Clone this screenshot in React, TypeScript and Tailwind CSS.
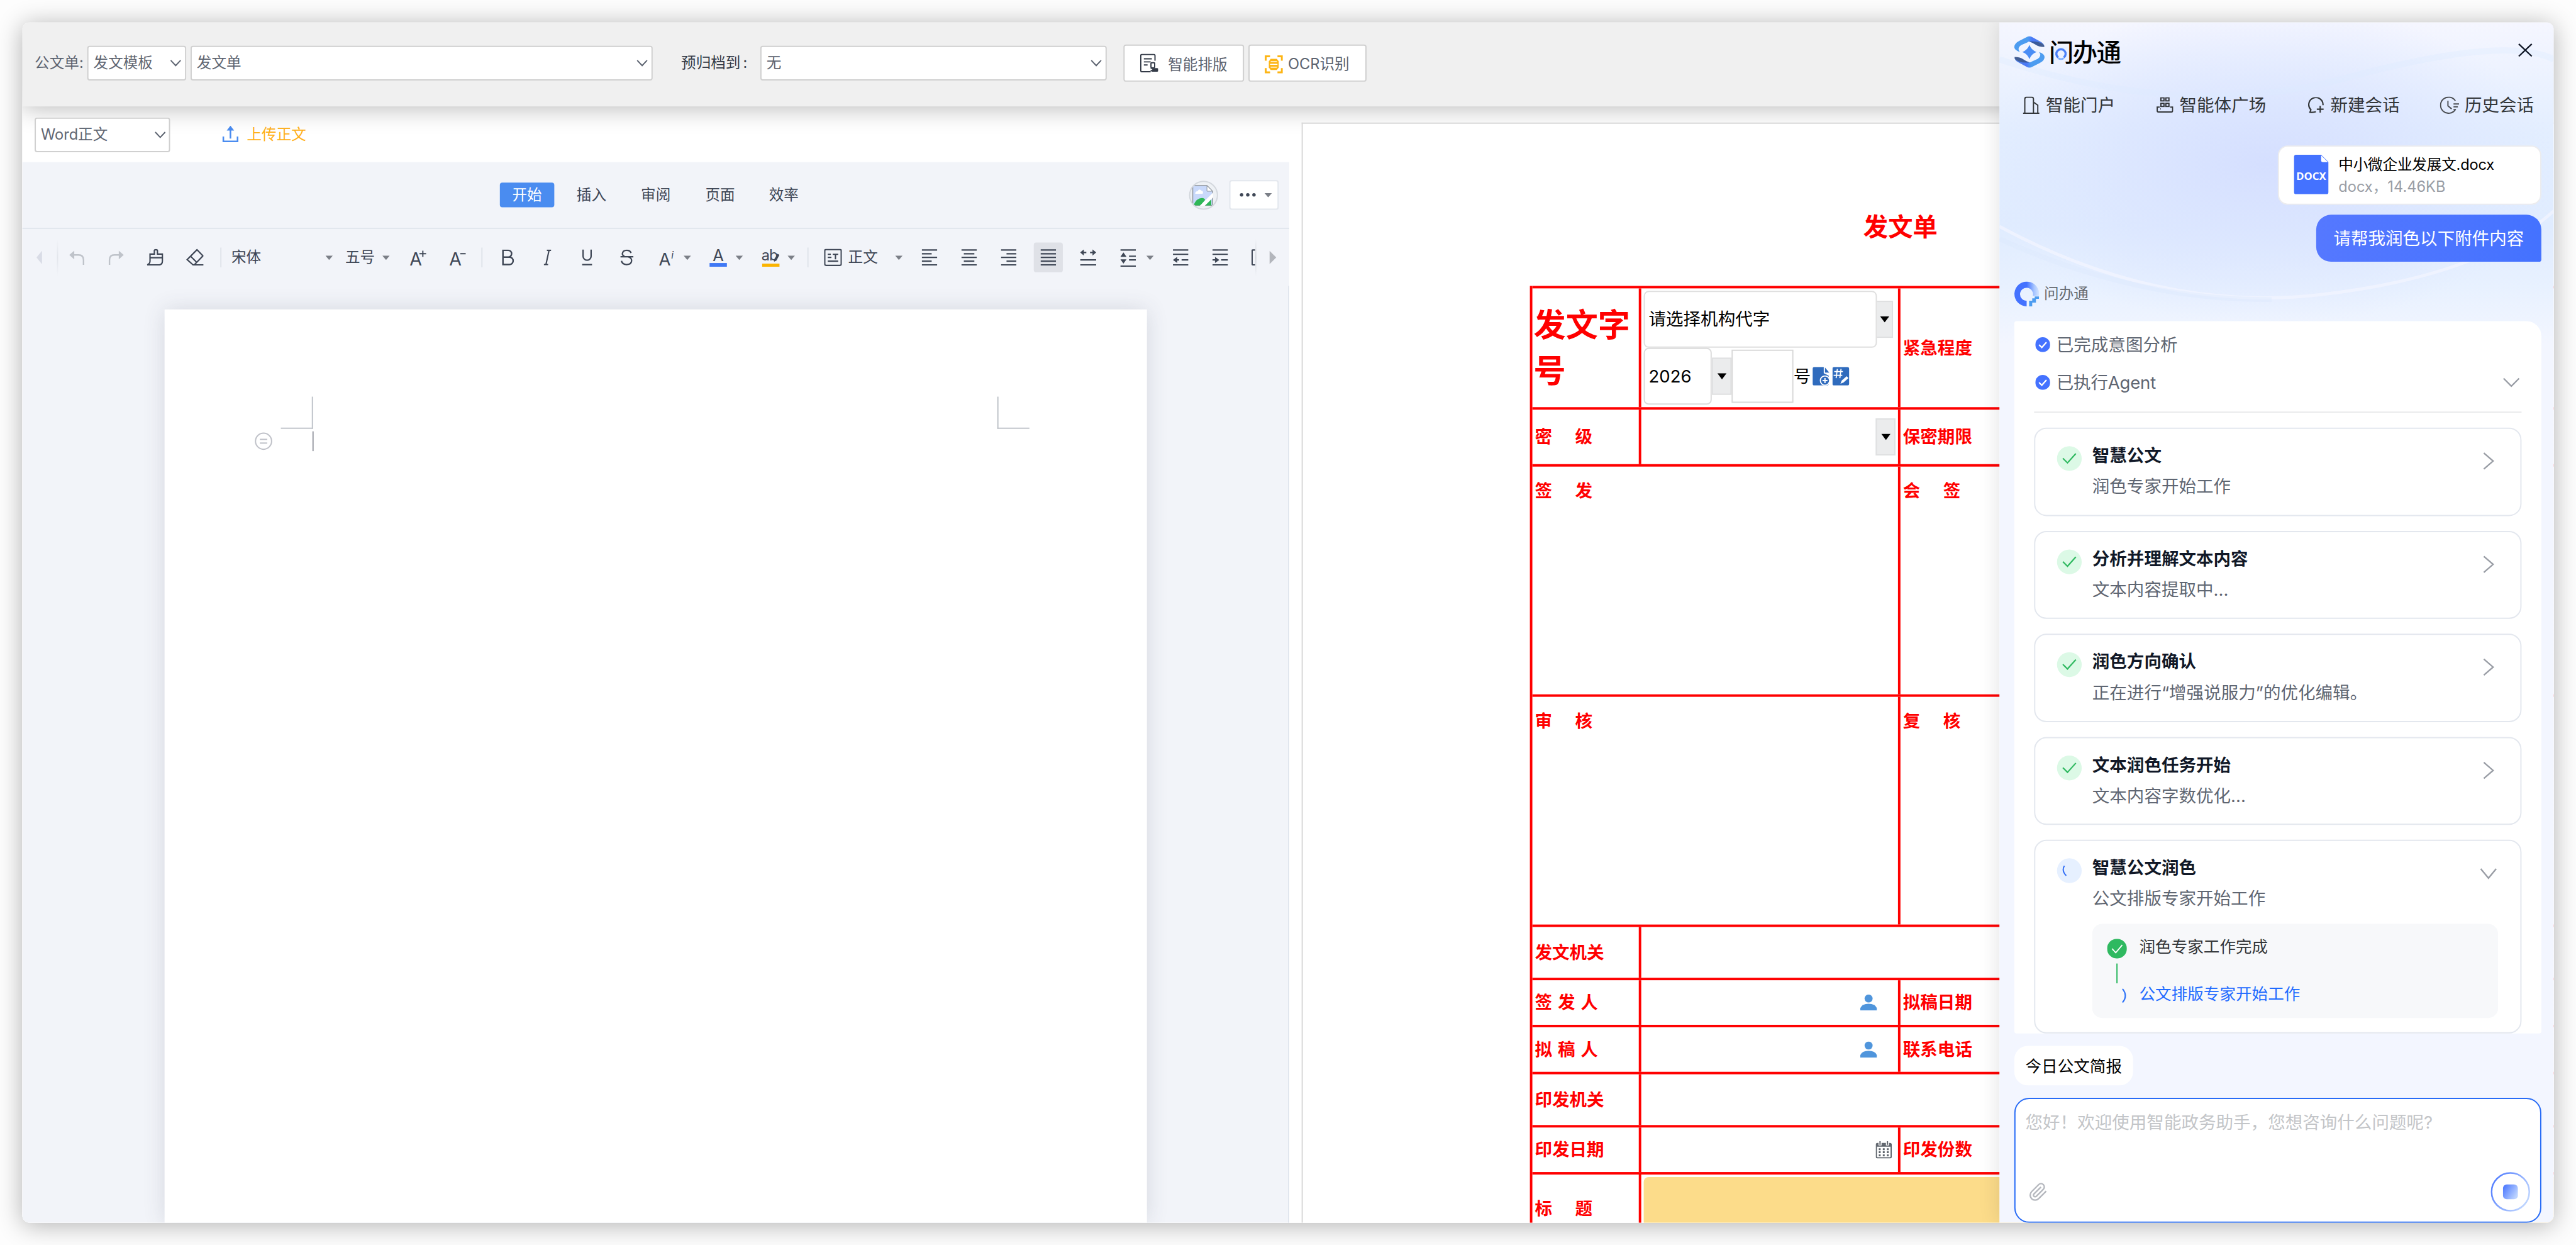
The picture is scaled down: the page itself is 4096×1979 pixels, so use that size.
import React from 'react';

const INK = '#3f4756';

function Chevron({ className = '' }: { className?: string }) {
  return (
    <svg className={className} width="18" height="12" viewBox="0 0 18 12" fill="none" stroke="#5c6370" strokeWidth="2">
      <path d="M1 1.500 9 10 17 1.500" />
    </svg>
  );
}

function Caret({ className = '' }: { className?: string }) {
  return (
    <svg className={'shrink-0 ' + className} width="12" height="7" viewBox="0 0 12 7" fill="#7b7f87">
      <path d="M0 0h12L6 7z" />
    </svg>
  );
}

function Select({ text, className, box }: { text: string; className: string; box: string }) {
  return (
    <div className={'flex shrink-0 items-center justify-between rounded border-2 border-[#d0d0d0] bg-white pl-2 text-[#5f6672] ' + box + ' ' + className}>
      <span>{text}</span>
      <Chevron />
    </div>
  );
}

function Header() {
  return (
    <div className="relative z-0 flex h-[136px] shrink-0 items-start bg-[#f0f0f0] pl-5 pt-[36px] text-[24px] leading-[56px] shadow-[0_4px_38px_rgba(0,0,0,0.28)]">
      <span className="mt-[2px] w-[85px] text-[#5c6370]">公文单:</span>
      <Select text="发文模板" box="h-[56px] w-[160px]" className="mt-[2px] pr-[6px]" />
      <Select text="发文单" box="h-[56px] w-[747px]" className="ml-[7px] mt-[2px] pr-[6px]" />
      <span className="ml-[46px] mt-[2px] w-[128px] whitespace-nowrap text-[#333a47]">
        预归档到<span className="ml-[4px]">:</span>
      </span>
      <Select text="无" box="h-[56px] w-[560px]" className="mt-[2px] pr-[6px]" />
      <div className="ml-[27px] flex h-[60px] w-[195px] items-center rounded border-2 border-[#d0d0d0] bg-white pl-[25px] text-[#5c6370]">
        <svg width="29" height="30" viewBox="0 0 29 30" fill="none" stroke="#333a47" strokeWidth="2">
          <path d="M24 11V3a2 2 0 0 0-2-2H3a2 2 0 0 0-2 2v24a2 2 0 0 0 2 2h14M6 8h13M6 13h11M6 18h6" />
          <rect x="17.500" y="14.500" width="6" height="8" rx="1" />
          <path d="M16 23h11a2 2 0 0 1 0 6h-8l-3-2.500 4-1z" fill="#333a47" stroke="none" />
        </svg>
        <span className="ml-[16px] mt-[5px]">智能排版</span>
      </div>
      <div className="ml-[7px] flex h-[60px] w-[191px] items-center rounded border-2 border-[#d0d0d0] bg-white pl-[24px] text-[#5c6370]">
        <svg className="mt-[4px]" width="30" height="30" viewBox="0 0 30 30" fill="none" stroke="#fdb515" strokeWidth="3">
          <path d="M2 9V2h7M21 2h7v7M28 21v7h-7M9 28H2v-7" />
          <path d="M10 6h10l3 4v10l-3 4H10l-3-4V10z" fill="#fdb515" stroke="none" />
          <path d="M10 10.500h10M9 15h12M10 19.500h10" stroke="#fff" strokeWidth="1.500" />
        </svg>
        <span className="ml-[8px] mt-[4px] whitespace-nowrap">OCR识别</span>
      </div>
    </div>
  );
}

function Lines({ rows, w = 25, className = '' }: { rows: number[][]; w?: number; className?: string }) {
  return (
    <svg className={'shrink-0 ' + className} width={w} height="28" viewBox={'0 0 ' + w + ' 28'} stroke={INK} strokeWidth="2.200">
      {rows.map(([x1, x2, y], i) => (
        <path key={i} d={`M${x1} ${y}H${x2}`} />
      ))}
    </svg>
  );
}

function Sep({ className }: { className: string }) {
  return <div className={'h-8 w-[2px] shrink-0 bg-[#e0e4ea] ' + className} />;
}

function Ribbon() {
  return (
    <div className="flex h-[92px] items-center text-[24px] text-[#3f4756]">
      <svg className="ml-[23px] shrink-0" width="9" height="22" viewBox="0 0 9 22" fill="#d9dce6"><path d="M9 0v22L0 11z" /></svg>
      <div className="ml-[24px] h-[60px] w-[2px] shrink-0 bg-linear-to-b from-transparent via-[#e2e5eb] to-transparent" />
      <svg className="ml-[17px] shrink-0" width="27" height="26" viewBox="0 0 27 26" fill="none" stroke="#bfc3ca" strokeWidth="2.400">
        <path d="M6 9h10q8 0 8 8v8" /><path d="M9 2v14L1 9z" fill="#bfc3ca" stroke="none" />
      </svg>
      <svg className="ml-[36px] shrink-0" width="27" height="26" viewBox="0 0 27 26" fill="none" stroke="#bfc3ca" strokeWidth="2.400">
        <path d="M20 9H11q-8 0-8 8v8" /><path d="M18 2v14l8-7z" fill="#bfc3ca" stroke="none" />
      </svg>
      <svg className="ml-[36px] shrink-0" width="28" height="28" viewBox="0 0 28 28" fill="none" stroke={INK} strokeWidth="2.200">
        <path d="M5.500 8.500h7V3q0-1.500 2.500-1.500T17.500 3v5.500h8V20q0 6-6 6H1q4.500-1.500 4.500-6zM5.500 14.500h20" />
      </svg>
      <svg className="ml-[36px] shrink-0" width="28" height="28" viewBox="0 0 28 28" fill="none" stroke={INK} strokeWidth="2.200">
        <path d="M17.500 1.500 27 11.500 13 26H11L1.500 17.500zM7.500 12.500 17 22M11 26h17" />
      </svg>
      <Sep className="ml-[27px]" />
      <span className="ml-[16px] w-[48px] shrink-0">宋体</span>
      <Caret className="ml-[104px]" />
      <span className="ml-[20px] w-[48px] shrink-0">五号</span>
      <Caret className="ml-[12px]" />
      <svg className="ml-[32px] shrink-0" width="27" height="40" viewBox="0 -6 27 40" stroke={INK} strokeWidth="2">
        <text x="0" y="27" fontSize="29" fill={INK} stroke="none">A</text><path d="M16 8h11M21.500 3v10" />
      </svg>
      <svg className="ml-[37px] shrink-0" width="27" height="40" viewBox="0 -6 27 40" stroke={INK} strokeWidth="2">
        <text x="0" y="27" fontSize="29" fill={INK} stroke="none">A</text><path d="M18 8h9" />
      </svg>
      <Sep className="ml-[25px]" />
      <svg className="ml-[31px] shrink-0" width="20" height="26" viewBox="0 0 20 26" fill="none" stroke={INK} strokeWidth="2.500">
        <path d="M2 1.500h8.500a5.500 5.500 0 0 1 0 11H2zM2 12.500h10.500a6 6 0 0 1 0 12H2z" />
      </svg>
      <svg className="ml-[48px] shrink-0" width="12" height="26" viewBox="0 0 12 26" fill="none" stroke={INK} strokeWidth="2.200">
        <path d="M5 1.500h7M0 24.500h7M8.500 1.500l-5 23" />
      </svg>
      <svg className="ml-[49px] shrink-0" width="18" height="26" viewBox="0 0 18 26" fill="none" stroke={INK} strokeWidth="2.300">
        <path d="M2.500 0v11a6.500 6.500 0 0 0 13 0V0M1 24.500h16" />
      </svg>
      <svg className="ml-[44px] shrink-0" width="22" height="26" viewBox="0 0 22 26" fill="none" stroke={INK} strokeWidth="2.300">
        <path d="M18 6Q17 1.500 11 1.500T4 7q0 3 4 5M1 12h21M13 12q6 1.500 6 6 0 6-8 6.500-7 0-8.500-6" />
      </svg>
      <svg className="ml-[41px] shrink-0" width="26" height="40" viewBox="0 -6 26 40" fill={INK}>
        <text x="0" y="27" fontSize="28">A</text><text x="20" y="16" fontSize="16" fontStyle="italic">i</text>
      </svg>
      <Caret className="ml-[14px]" />
      <div className="ml-[29px] flex w-[30px] shrink-0 flex-col items-center">
        <span className="h-[24px] text-[26px] leading-[24px]">A</span>
        <div className="h-[6px] w-[28px] bg-[#3f78f5]" />
      </div>
      <Caret className="ml-[13px]" />
      <div className="ml-[29px] flex w-[31px] shrink-0 flex-col items-center">
        <div className="flex h-[24px] items-center text-[24px] leading-[24px] tracking-[-1px]">
          ab<svg className="-ml-[6px] mt-[7px]" width="9" height="13" viewBox="0 0 9 13" fill={INK}><path d="M6 0l3 2-5 9-4 2 1-5z" /></svg>
        </div>
        <div className="mt-[1px] h-[5px] w-[28px] bg-[#fbb400]" />
      </div>
      <Caret className="ml-[12px]" />
      <Sep className="ml-[20px]" />
      <svg className="ml-[25px] shrink-0" width="29" height="28" viewBox="0 0 29 28" fill="none" stroke={INK} strokeWidth="2.200">
        <rect x="1.200" y="1.200" width="26.600" height="25.600" rx="2" /><path d="M6 9h5M6 14h6M14 9h9M18.500 9v8M6 20h17" />
      </svg>
      <span className="ml-[10px] w-[48px] shrink-0">正文</span>
      <Caret className="ml-[28px]" />
      <Lines className="ml-[31px]" rows={[[0, 25, 2], [0, 16, 8], [0, 25, 14], [0, 16, 20], [0, 25, 26]]} />
      <Lines className="ml-[39px]" rows={[[0, 25, 2], [4, 21, 8], [0, 25, 14], [4, 21, 20], [0, 25, 26]]} />
      <Lines className="ml-[39px]" rows={[[0, 25, 2], [9, 25, 8], [0, 25, 14], [9, 25, 20], [0, 25, 26]]} />
      <div className="ml-[28px] flex h-[48px] w-[47px] shrink-0 items-center justify-center rounded bg-[#dfe1e7]">
        <Lines rows={[[0, 25, 2], [0, 25, 8], [0, 25, 14], [0, 25, 20], [0, 25, 26]]} />
      </div>
      <svg className="ml-[28px] shrink-0" width="26" height="28" viewBox="0 0 26 28" stroke={INK} strokeWidth="2.200">
        <path d="M4 6h6M16 6h6M0 18h26M0 26h26" /><path d="M6 1v10L0 6zM20 1v10l6-5z" fill={INK} stroke="none" />
      </svg>
      <svg className="ml-[39px] shrink-0" width="25" height="30" viewBox="0 0 25 30" stroke={INK} strokeWidth="2.200">
        <path d="M0 3h25M14 13h11M14 19h11M0 29h25" /><path d="M5 7l5 7H0zM5 25l5-7H0z" fill={INK} stroke="none" />
      </svg>
      <Caret className="ml-[17px]" />
      <svg className="ml-[31px] shrink-0" width="25" height="28" viewBox="0 0 25 28" stroke={INK} strokeWidth="2.200">
        <path d="M0 2h25M0 9h25M4 18h6M14 18h11M0 26h25" /><path d="M7 13v10l-7-5z" fill={INK} stroke="none" />
      </svg>
      <svg className="ml-[39px] shrink-0" width="25" height="28" viewBox="0 0 25 28" stroke={INK} strokeWidth="2.200">
        <path d="M0 2h25M0 9h25M0 18h6M14 18h11M0 26h25" /><path d="M4 13v10l7-5z" fill={INK} stroke="none" />
      </svg>
      <svg className="ml-[38px] shrink-0" width="6" height="28" viewBox="0 0 6 28" fill="none" stroke={INK} strokeWidth="2.200"><path d="M6 2H2q-1 0-1 1v22q0 1 1 1h4" /></svg>
      <div className="h-[60px] w-[2px] shrink-0 bg-linear-to-b from-transparent via-[#d5d8de] to-transparent" />
      <svg className="ml-[21px] shrink-0" width="11" height="22" viewBox="0 0 11 22" fill="#b3b6bc"><path d="M0 0v22l11-11z" /></svg>
    </div>
  );
}

function Editor() {
  return (
    <div className="flex w-[2048px] shrink-0 flex-col">
      <div className="flex h-[90px] shrink-0 items-start pl-[20px] pt-[18px] text-[24px] leading-[52px]">
        <Select text="Word正文" box="h-[56px] w-[219px]" className="relative z-20 pr-[5px]" />
        <svg className="ml-[84px] mt-[13px]" width="27" height="28" viewBox="0 0 27 28" fill="none" stroke="#4a8cf0" strokeWidth="2.600">
          <path d="M13.500 4v17M2 17.500v8h23v-8" /><path d="M13.500 0l6 8h-12z" fill="#4a8cf0" stroke="none" />
        </svg>
        <span className="ml-[13px] mt-[2px] text-[#ffb11a]">上传正文</span>
      </div>
      <div className="relative flex min-h-0 flex-1 flex-col bg-[#f2f4f9]">
        <div className="flex h-[108px] shrink-0 items-center border-b-2 border-[#e1e6ee] pl-[772px] text-[24px] text-[#3f4756]">
          <div className="flex h-[40px] w-[88px] items-center justify-center rounded bg-[#4a8cf0] text-white">开始</div>
          <span className="ml-[36px]">插入</span>
          <span className="ml-[56px]">审阅</span>
          <span className="ml-[56px]">页面</span>
          <span className="ml-[55px]">效率</span>
          <div className="ml-auto mr-[18px] flex h-[47px] w-[47px] items-center justify-center overflow-hidden rounded-full border-2 border-[#d4d8de] bg-[#eef1f5]">
            <svg className="mr-[4px] mt-[2px]" width="34" height="34" viewBox="0 0 34 34">
              <path d="M1 1h23l9 9v23H1z" fill="#c9d9fb" stroke="#8e949c" strokeWidth="1.500" />
              <path d="M24 1v9h9z" fill="#fff" stroke="#8e949c" />
              <path d="M5 14q0-4 4-4 2-5 6-1 4 1 2 5z" fill="#fff" />
              <path d="M2 33q5-12 14-12 4 0 5 3l-7 9z" fill="#2fb757" /><path d="M21 33l10-10v10z" fill="#2fb757" />
              <path d="M12 34 34 12v8L20 34z" fill="#fff" />
            </svg>
          </div>
          <div className="mr-[17px] flex h-[48px] w-[80px] shrink-0 items-center rounded border-2 border-[#e3e7ed] bg-white pl-[14px]">
            <svg width="28" height="8" viewBox="0 0 28 8" fill={INK}><circle cx="4" cy="4" r="2.800" /><circle cx="14" cy="4" r="2.800" /><circle cx="24" cy="4" r="2.800" /></svg>
            <Caret className="ml-[13px]" />
          </div>
        </div>
        <div className="h-[92px] shrink-0"><Ribbon /></div>
        <div className="flex min-h-0 flex-1 justify-start border-r-2 border-[#e1e6ee] pl-[230px] pt-[38px]">
          <div className="h-full w-[1588px] bg-white px-[146px] pt-[141px] shadow-[0_0_34px_rgba(60,70,90,0.16)]">
            <div className="flex justify-between pl-[42px] pr-[44px]">
              <div className="h-[52px] w-[52px] border-b-2 border-r-2 border-[#bfc3c9]" />
              <div className="h-[52px] w-[52px] border-b-2 border-l-2 border-[#bfc3c9]" />
            </div>
            <div className="mt-[4px] flex items-center">
              <div className="flex h-[28px] w-[28px] flex-col items-center justify-center gap-[4px] rounded-full border-2 border-[#bfc1c8]">
                <div className="h-[2px] w-[12px] bg-[#bfc1c8]" /><div className="h-[2px] w-[12px] bg-[#bfc1c8]" />
              </div>
              <div className="ml-[65px] h-[32px] w-[2px] bg-[#999ca5]" />
            </div>
          </div>
        </div>
      </div>
    </div>
  );
}

function BlackCaret() {
  return <svg width="15" height="10" viewBox="0 0 15 10"><path d="M0 0h15L7.500 10z" /></svg>;
}

function DropButton({ className }: { className: string }) {
  return <div className={'flex h-[60px] items-center justify-center border-2 border-[#dfe0e1] bg-[#ebeced] ' + className}><BlackCaret /></div>;
}

function Row({ h, label, middle, right, top = false }: { h: string; label: React.ReactNode; middle?: React.ReactNode; right?: React.ReactNode; top?: boolean }) {
  const align = top ? 'items-start pt-[18px]' : 'items-center';
  return (
    <div className={'flex shrink-0 border-t-4 border-[#ff0000] ' + h}>
      <div className={'flex w-[172px] shrink-0 pl-[4px] ' + align}>{label}</div>
      <div className={'flex w-[419px] shrink-0 items-center ' + (top ? '' : 'border-l-4 border-[#ff0000]')}>{middle}</div>
      {right && <div className={'flex flex-1 border-l-4 border-[#ff0000] pl-[4px] ' + align}>{right}</div>}
    </div>
  );
}

function Spaced({ a, b, c }: { a: string; b: string; c?: string }) {
  return (
    <span className={'flex ' + (c ? 'gap-[9px]' : 'gap-[37px]')}>
      <span>{a}</span><span>{b}</span>{c && <span>{c}</span>}
    </span>
  );
}

function Person() {
  return (
    <svg className="ml-auto mr-[34px]" width="27" height="26" viewBox="0 0 27 26" fill="#4f95dc">
      <circle cx="13.500" cy="6.500" r="6.500" /><path d="M0 26v-4q3-7 13.500-7T27 22v4z" />
    </svg>
  );
}

function FormPane() {
  return (
    <div className="relative z-20 ml-[20px] mt-[26px] flex flex-1 flex-col overflow-hidden border-l-2 border-t-2 border-[#d8d8d8] bg-white">
      <div className="mt-[137px] flex h-[60px] items-center pl-[906px] text-[40px] font-bold text-[#ff0000]">发文单</div>
      <div className="ml-[367px] mt-[65px] flex flex-col border-l-4 border-[#ff0000] text-[28px] font-bold leading-[42px] text-[#ff0000]">
        <Row
          h="h-[196px]"
          label={<span className="-ml-[2px] mt-[2px] w-[165px] text-[52px] leading-[74px]">发文字号</span>}
          middle={
            <div className="flex flex-col pl-[4px] font-normal text-black">
              <div className="flex items-center">
                <div className="flex h-[92px] w-[377px] items-center rounded-lg border-2 border-[#dfdfdf] pl-[6px]">请选择机构代字</div>
                <DropButton className="w-[26px] border-l-0" />
              </div>
              <div className="flex items-center">
                <div className="flex h-[92px] w-[110px] items-center rounded-lg border-2 border-[#dcdcdc] pl-[6px]">2026</div>
                <DropButton className="w-[32px]" />
                <div className="h-[86px] w-[100px] border-2 border-[#d9d9d9]" />
                <span>号</span>
                <svg className="ml-[3px]" width="28" height="30" viewBox="0 0 28 30">
                  <path d="M3 0h15v10l8 4v13q0 3-3 3H3q-3 0-3-3V3q0-3 3-3z" fill="#2f6bbd" /><path d="M20 1l7 8h-7z" fill="#2f6bbd" />
                  <circle cx="20" cy="22" r="7.500" fill="#2f6bbd" stroke="#fff" strokeWidth="1.800" /><path d="M20 18v8M16 22h8" stroke="#fff" strokeWidth="2" />
                </svg>
                <svg className="ml-[4px]" width="28" height="30" viewBox="0 0 28 30">
                  <rect width="27" height="30" rx="3" fill="#2f6bbd" />
                  <path d="M8 3 6 18M14 3l-2 15M3 7.500h14M2 13.500h14" stroke="#fff" strokeWidth="1.800" />
                  <path d="M13 27l2-5 8-7 3 3-8 7z" fill="#fff" />
                </svg>
              </div>
            </div>
          }
          right="紧急程度"
        />
        <Row h="h-[92px]" label={<Spaced a="密" b="级" />} middle={<DropButton className="ml-auto mr-[4px] w-[32px]" />} right="保密期限" />
        <Row h="h-[372px]" top label={<Spaced a="签" b="发" />} right={<Spaced a="会" b="签" />} />
        <Row h="h-[372px]" top label={<Spaced a="审" b="核" />} right={<Spaced a="复" b="核" />} />
        <Row h="h-[86px]" label="发文机关" />
        <Row h="h-[76px]" label={<Spaced a="签" b="发" c="人" />} middle={<Person />} right="拟稿日期" />
        <Row h="h-[76px]" label={<Spaced a="拟" b="稿" c="人" />} middle={<Person />} right="联系电话" />
        <Row h="h-[86px]" label="印发机关" />
        <Row
          h="h-[76px]"
          label="印发日期"
          middle={
            <svg className="ml-auto mr-[10px]" width="26" height="28" viewBox="0 0 26 28" fill="none" stroke="#5d636b" strokeWidth="2">
              <rect x="1" y="4" width="24" height="23" rx="2" /><path d="M2 7h22" strokeWidth="4" /><path d="M7 0v7M19 0v7" stroke="#fff" strokeWidth="5" /><path d="M7 0v6M19 0v6" />
              <path d="M5 13h3M11.500 13h3M18 13h3M5 18h3M11.500 18h3M18 18h3M5 23h3M11.500 23h3M18 23h3" strokeWidth="3" />
            </svg>
          }
          right="印发份数"
        />
        <div className="flex h-[114px] shrink-0 border-t-4 border-[#ff0000]">
          <div className="flex w-[172px] shrink-0 items-center pl-[4px]"><Spaced a="标" b="题" /></div>
          <div className="flex-1 border-l-4 border-[#ff0000] pl-[4px] pt-[4px]"><div className="h-full rounded-tl-lg bg-[#fcdc8a]" /></div>
        </div>
      </div>
    </div>
  );
}

function BlueCheck() {
  return (
    <svg width="24" height="24" viewBox="0 0 24 24" fill="none">
      <circle cx="12" cy="12" r="12" fill="#4472ff" /><path d="M6 12l4.500 4.500L18 8" stroke="#fff" strokeWidth="2.200" />
    </svg>
  );
}

function Step({ title, text, open = false, children }: { title: string; text: string; open?: boolean; children?: React.ReactNode }) {
  return (
    <div className={'flex shrink-0 flex-col rounded-[20px] border-2 border-[#e3e7ee] ' + (open ? 'h-[313px]' : 'h-[142.5px]')}>
      <div className="flex items-start pl-[35px] pr-[41px]">
        <div className={'mt-[28px] flex h-[40px] w-[40px] items-center justify-center rounded-full ' + (open ? 'bg-[#e6f0ff]' : 'bg-[#dcf9e6]')}>
          {open ? (
            <svg width="24" height="24" viewBox="0 0 24 24" fill="none" stroke="#2f6cf6" strokeWidth="2"><path d="M4 4q-5 8 3 16" /></svg>
          ) : (
            <svg width="24" height="20" viewBox="0 0 24 20" fill="none" stroke="#2fb960" strokeWidth="2.200"><path d="M1.500 9.500 9 17 22.500 2" /></svg>
          )}
        </div>
        <div className="ml-[17px] mt-[22px] flex flex-col text-[28px] leading-[42px]">
          <span className="font-bold text-[#111827]">{title}</span>
          <span className="mt-[8px] text-[#5f6672]">{text}</span>
        </div>
        {open ? (
          <svg className="ml-auto mr-[-3px] mt-[43px]" width="27" height="20" viewBox="0 0 27 20" fill="none" stroke="#999da5" strokeWidth="2.400"><path d="M1 2l12.500 15L26 2" /></svg>
        ) : (
          <svg className="ml-auto mt-[38px]" width="20" height="28" viewBox="0 0 20 28" fill="none" stroke="#999da5" strokeWidth="2.400"><path d="M2 1l15 13L2 27" /></svg>
        )}
      </div>
      {children}
    </div>
  );
}

function Logo() {
  return (
    <svg width="50" height="52" viewBox="0 0 50 52">
      <defs>
        <linearGradient id="fold" x1="0" x2="1"><stop offset="0" stopColor="#4c9cf0" /><stop offset="0.450" stopColor="#4c9cf0" /><stop offset="0.600" stopColor="#4a78f8" /><stop offset="1" stopColor="#5080e0" /></linearGradient>
        <linearGradient id="shade" x1="0" x2="1"><stop offset="0" stopColor="#2f55a5" /><stop offset="1" stopColor="#48608e" /></linearGradient>
        <g id="half">
          <path d="M9 26Q0 23 0 18q0-6 8-10L20 2q4.500-2.500 9 0l13 7q7 4 6.500 8L27 9.500q-3-1-6 1L11 15q-7 5-2 11z" fill="url(#fold)" />
          <path d="M24 9q10-1 18 2 7 3 6.500 7-9 0-14.500-4-4-3-10-5z" fill="url(#shade)" />
        </g>
      </defs>
      <use href="#half" />
      <use href="#half" transform="rotate(180 24.500 26)" />
      <path d="M24.500 14.500q3 8.500 11.500 11.500-8.500 3-11.500 11.500Q21.500 29 13 26q8.500-3 11.500-11.500z" fill="#4a8df5" />
    </svg>
  );
}

function Assistant() {
  return (
    <aside className="absolute right-0 top-0 z-30 flex h-full w-[896px] flex-col bg-[radial-gradient(ellipse_470px_260px_at_430px_230px,#d5dfff_0%,#d9e3ffb0_45%,#e2edff00_100%),linear-gradient(#f5f6ff_0px,#eef3ff_70px,#e3eeff_180px,#e0ecff_330px,#e8f1ff_430px,#f3f6ff_520px)] shadow-[0_0_32px_rgba(0,0,0,0.12)]">
      <svg className="absolute left-0 top-0" width="896" height="520" viewBox="0 0 896 520" fill="none">
        <path d="M0 60Q300 160 560 90T896 60" stroke="#dcebff" strokeWidth="10" opacity="0.350" />
        <path d="M0 330Q260 470 520 440T896 305" stroke="#f1f4ff" strokeWidth="5" opacity="0.800" />
        <path d="M0 350Q220 450 440 448" stroke="#dbe9fc" strokeWidth="8" opacity="0.400" />
      </svg>
      <div className="relative mt-[22px] flex h-[52px] shrink-0 items-center pl-[24px] pr-[34px]">
        <Logo />
        <div className="relative ml-[6px] mt-[3px] text-[40px] font-medium leading-[52px] tracking-[-1.500px] text-black">
          问办通
          <div className="absolute left-[9px] top-[16px] flex h-[22px] w-[21px] items-center justify-center bg-[#eaf1ff]">
            <svg width="19" height="20" viewBox="0 0 19 20" fill="none" stroke="#4a80f8" strokeWidth="3.500"><path d="M5 16a7.500 7.500 0 1 1 9 0" /><path d="M5 17q4.500 3 9 0" stroke="#7fb0ff" strokeWidth="3" /></svg>
          </div>
        </div>
        <svg className="mb-[7px] ml-auto" width="24" height="22" viewBox="0 0 24 22" stroke="#111827" strokeWidth="2.300"><path d="M1.500 1l21 20M22.500 1l-21 20" /></svg>
      </div>
      <div className="relative mt-[40px] flex h-[40px] shrink-0 items-center whitespace-nowrap pl-[38px] text-[28px] text-[#333639]">
        <svg width="27" height="28" viewBox="0 0 27 28" fill="none" stroke="#333639" strokeWidth="2"><path d="M3 27V4q0-3 3-3h8q3 0 3 3v23M17 9l7 5v13M0 27h26.500" /></svg>
        <span className="ml-[10px]">智能门户</span>
        <svg className="ml-[67px]" width="27" height="26" viewBox="0 0 27 26" fill="none" stroke="#333639" strokeWidth="2"><rect x="7" y="1" width="5" height="5" /><rect x="15" y="1" width="5" height="5" /><rect x="7" y="10" width="5" height="5" /><rect x="15" y="10" width="5" height="5" /><path d="M5 16H1v6q0 2 2 2h21q2 0 2-2v-6h-4M6 19h1" /></svg>
        <span className="ml-[10px]">智能体广场</span>
        <svg className="ml-[67px]" width="27" height="26" viewBox="0 0 27 26" fill="none" stroke="#333639" strokeWidth="2.200"><path d="M25 13A11.500 11.500 0 1 0 5.500 20.300L4 24.300q6 .7 9.500-.8M20.500 14v11M15 19.500h11" /></svg>
        <span className="ml-[10px]">新建会话</span>
        <svg className="ml-[65px]" width="31" height="28" viewBox="0 0 31 28" fill="none" stroke="#4c4f54" strokeWidth="2"><path d="M25 7a13 13 0 1 0 0 14M13 7v8l6 5M22 12h9M22 16.500h7M22 21h4" /></svg>
        <span className="ml-[9px]">历史会话</span>
      </div>
      <div className="relative mr-[20px] mt-[45px] flex h-[96px] w-[426px] shrink-0 self-end rounded-2xl border-2 border-[#ececee] bg-white pl-[24px] pt-[13px]">
        <div className="relative h-[64px] w-[56px]">
          <svg width="56" height="64" viewBox="0 0 56 64"><path d="M4 0h40l12 12v48q0 4-4 4H4q-4 0-4-4V4q0-4 4-4z" fill="#4472ff" /><path d="M44 1v8q0 3 3 3h8z" fill="#fff" /></svg>
          <span className="absolute inset-x-0 top-[24px] text-center font-['Noto_Sans'] text-[17px] font-bold leading-[22px] text-white">DOCX</span>
        </div>
        <div className="-mt-[2px] ml-[16px] flex flex-col text-[24px] leading-[36px]">
          <span className="tracking-[-0.200px] text-black">中小微企业发展文.docx</span>
          <span className="text-[#999da5]">docx，14.46KB</span>
        </div>
      </div>
      <div className="relative mr-[20px] mt-[16px] flex h-[76px] w-[364px] shrink-0 items-center justify-center self-end whitespace-nowrap rounded-[24px] rounded-br-[4px] bg-linear-to-r from-[#5578ff] to-[#4472ff] text-[28px] text-white">请帮我润色以下附件内容</div>
      <div className="relative mt-[32px] flex h-[40px] shrink-0 items-center pl-[24px] text-[24px] text-[#666a70]">
        <svg width="40" height="40" viewBox="0 0 40 40" fill="none">
          <defs><linearGradient id="ring" x1="0" x2="1"><stop offset="0.500" stopColor="#4472ff" /><stop offset="0.800" stopColor="#a8c6ff" /><stop offset="1" stopColor="#d5e5ff" /></linearGradient></defs>
          <path d="M20 40A20 20 0 1 1 40 23L30 23A10.500 10.500 0 1 0 20 31z" fill="url(#ring)" />
          <path d="M24 40v-9h5v-4h4v-3h7v4h-5v6h-6v6z" fill="#4c9cf0" />
        </svg>
        <span className="ml-[8px]">问办通</span>
      </div>
      <div className="relative ml-[24px] mt-[24px] flex h-[1151px] w-[852px] shrink-0 flex-col rounded-[4px] rounded-tr-[24px] bg-white px-[32px] text-[28px] text-[#5f6672]">
        <div className="mt-[18px] flex h-[40px] items-center gap-[10px] pl-[2px]"><BlueCheck />已完成意图分析</div>
        <div className="mt-[21px] flex h-[40px] items-center gap-[10px] pl-[2px]">
          <BlueCheck /><span className="tracking-[-0.200px]">已执行Agent</span>
          <svg className="ml-auto mr-[3px]" width="27" height="16" viewBox="0 0 27 16" fill="none" stroke="#999da5" strokeWidth="2.400"><path d="M1 1.500 13.500 14 26 1.500" /></svg>
        </div>
        <div className="mt-[27px] h-[2px] shrink-0 bg-[#e9eaec]" />
        <div className="mt-[24px] flex flex-col gap-[24px]">
          <Step title="智慧公文" text="润色专家开始工作" />
          <Step title="分析并理解文本内容" text="文本内容提取中..." />
          <Step title="润色方向确认" text="正在进行“增强说服力”的优化编辑。" />
          <Step title="文本润色任务开始" text="文本内容字数优化..." />
          <Step title="智慧公文润色" text="公文排版专家开始工作" open>
            <div className="ml-[92px] mt-[20px] flex h-[152px] w-[656px] shrink-0 flex-col rounded-2xl bg-[#f7f8fa] pl-[24px] pt-[20px] text-[26px] leading-[36px]">
              <div className="flex h-[40px] items-center">
                <svg width="32" height="32" viewBox="0 0 32 32" fill="none"><circle cx="16" cy="16" r="16" fill="#2fb960" /><path d="M8 16l6 6.500L24.500 10" stroke="#fff" strokeWidth="1.800" /></svg>
                <span className="mb-[7px] ml-[20px] text-[#333639]">润色专家工作完成</span>
              </div>
              <div className="ml-[15px] mt-[4px] h-[32px] w-[2px] bg-[#2fb960]" />
              <div className="mt-[-3px] flex h-[40px] items-center text-[#1f6bff]">
                <svg className="mt-[5px]" width="32" height="32" viewBox="0 0 32 32" fill="none" stroke="#2f74f8" strokeWidth="2.200"><path d="M25 5q9 11 0 22" /></svg>
                <span className="ml-[20px]">公文排版专家开始工作</span>
              </div>
            </div>
          </Step>
        </div>
      </div>
      <div className="ml-[24px] mt-[20px] flex h-[64px] w-[192px] shrink-0 items-center justify-center rounded-[22px] bg-white text-[26px] text-black">今日公文简报</div>
      <div className="ml-[24px] mt-[20px] flex h-[202px] w-[852px] shrink-0 flex-col rounded-[24px] border-2 border-[#286cf6] bg-white px-[16px] pt-[17px] text-[28px] leading-[42px] text-[#c3c5c8]">
        <span>您好！欢迎使用智能政务助手，您想咨询什么问题呢?</span>
        <div className="mt-[59px] flex h-[64px] items-center justify-between">
          <svg className="ml-[4px]" width="34" height="32" viewBox="0 0 24 24" fill="none" stroke="#b5b8be" strokeWidth="1.800"><path d="m21.440 11.050-9.190 9.190a6 6 0 0 1-8.490-8.490l8.570-8.570A4 4 0 1 1 18 8.840l-8.590 8.570a2 2 0 0 1-2.830-2.830l8.490-8.480" /></svg>
          <svg width="64" height="64" viewBox="0 0 64 64" fill="none">
            <defs><linearGradient id="stop" x1="0" y1="0" x2="1" y2="0.600"><stop offset="0" stopColor="#4472ff" /><stop offset="1" stopColor="#bcd3ff" /></linearGradient></defs>
            <circle cx="32" cy="32" r="30.500" stroke="url(#stop)" strokeWidth="2.600" />
            <rect x="20" y="20" width="24" height="24" rx="6" fill="url(#stop)" />
          </svg>
        </div>
      </div>
    </aside>
  );
}

export default function App() {
  return (
    <div className="h-[1979px] w-[4096px] overflow-hidden bg-[#fdfdfd]">
      <div className="h-[2012px] w-[4164px] origin-top-left scale-[0.98367] bg-[#fdfdfd] p-[36px] font-['Inter','Noto_Sans_CJK_SC',sans-serif]">
        <div className="h-[1940px] w-[4092px] rounded-[12px] shadow-[0_4px_40px_rgba(0,0,0,0.3)]">
          <div className="relative flex h-full w-full flex-col overflow-hidden rounded-[12px] bg-white">
            <Header />
            <div className="flex min-h-0 flex-1">
              <Editor />
              <FormPane />
            </div>
            <Assistant />
          </div>
        </div>
      </div>
    </div>
  );
}
